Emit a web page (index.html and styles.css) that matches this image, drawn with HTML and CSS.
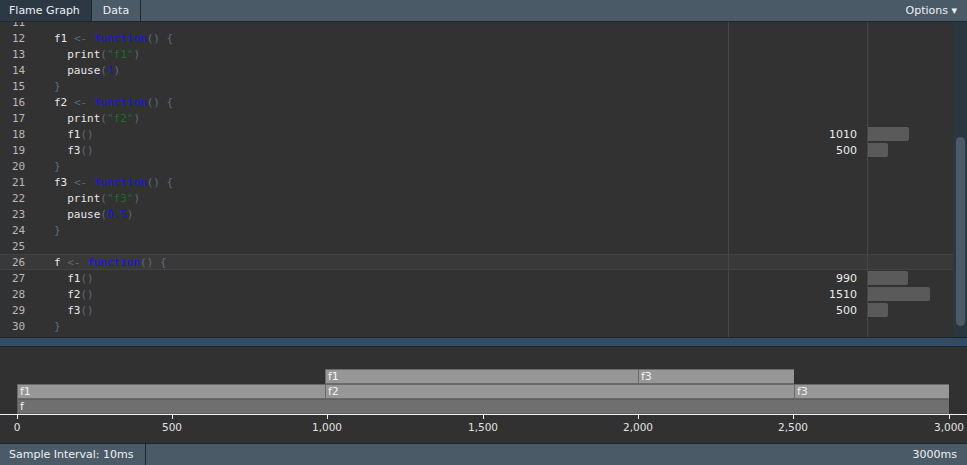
FILE: index.html
```html
<!DOCTYPE html>
<html>
<head>
<meta charset="utf-8">
<link rel="stylesheet" href="styles.css">
</head>
<body>
<div class="app">
  <div class="topbar">
    <div class="tab tab-active">Flame Graph</div>
    <div class="tab tab-data">Data</div>
    <div class="spacer"></div>
    <div class="options">Options ▾</div>
  </div>

  <div class="codepane">
    <div class="rows">
      <div class="row"><div class="src"><span class="ln">11</span><span class="code"></span></div><div class="cnt"></div><div class="barcell"></div></div>
      <div class="row"><div class="src"><span class="ln">12</span><span class="code">f1 <span class="p">&lt;-</span> <span class="kw">function</span><span class="p">() {</span></span></div><div class="cnt"></div><div class="barcell"></div></div>
      <div class="row"><div class="src"><span class="ln">13</span><span class="code">  print<span class="p">(</span><span class="str">"f1"</span><span class="p">)</span></span></div><div class="cnt"></div><div class="barcell"></div></div>
      <div class="row"><div class="src"><span class="ln">14</span><span class="code">  pause<span class="p">(</span><span class="num">1</span><span class="p">)</span></span></div><div class="cnt"></div><div class="barcell"></div></div>
      <div class="row"><div class="src"><span class="ln">15</span><span class="code"><span class="p">}</span></span></div><div class="cnt"></div><div class="barcell"></div></div>
      <div class="row"><div class="src"><span class="ln">16</span><span class="code">f2 <span class="p">&lt;-</span> <span class="kw">function</span><span class="p">() {</span></span></div><div class="cnt"></div><div class="barcell"></div></div>
      <div class="row"><div class="src"><span class="ln">17</span><span class="code">  print<span class="p">(</span><span class="str">"f2"</span><span class="p">)</span></span></div><div class="cnt"></div><div class="barcell"></div></div>
      <div class="row"><div class="src"><span class="ln">18</span><span class="code">  f1<span class="p">()</span></span></div><div class="cnt">1010</div><div class="barcell"><div class="hbar" style="width:41px"></div></div></div>
      <div class="row"><div class="src"><span class="ln">19</span><span class="code">  f3<span class="p">()</span></span></div><div class="cnt">500</div><div class="barcell"><div class="hbar" style="width:20px"></div></div></div>
      <div class="row"><div class="src"><span class="ln">20</span><span class="code"><span class="p">}</span></span></div><div class="cnt"></div><div class="barcell"></div></div>
      <div class="row"><div class="src"><span class="ln">21</span><span class="code">f3 <span class="p">&lt;-</span> <span class="kw">function</span><span class="p">() {</span></span></div><div class="cnt"></div><div class="barcell"></div></div>
      <div class="row"><div class="src"><span class="ln">22</span><span class="code">  print<span class="p">(</span><span class="str">"f3"</span><span class="p">)</span></span></div><div class="cnt"></div><div class="barcell"></div></div>
      <div class="row"><div class="src"><span class="ln">23</span><span class="code">  pause<span class="p">(</span><span class="num">0.5</span><span class="p">)</span></span></div><div class="cnt"></div><div class="barcell"></div></div>
      <div class="row"><div class="src"><span class="ln">24</span><span class="code"><span class="p">}</span></span></div><div class="cnt"></div><div class="barcell"></div></div>
      <div class="row"><div class="src"><span class="ln">25</span><span class="code"></span></div><div class="cnt"></div><div class="barcell"></div></div>
      <div class="row row-hl"><div class="src"><span class="ln">26</span><span class="code">f <span class="p">&lt;-</span> <span class="kw">function</span><span class="p">() {</span></span></div><div class="cnt"></div><div class="barcell"></div></div>
      <div class="row"><div class="src"><span class="ln">27</span><span class="code">  f1<span class="p">()</span></span></div><div class="cnt">990</div><div class="barcell"><div class="hbar" style="width:40px"></div></div></div>
      <div class="row"><div class="src"><span class="ln">28</span><span class="code">  f2<span class="p">()</span></span></div><div class="cnt">1510</div><div class="barcell"><div class="hbar" style="width:62px"></div></div></div>
      <div class="row"><div class="src"><span class="ln">29</span><span class="code">  f3<span class="p">()</span></span></div><div class="cnt">500</div><div class="barcell"><div class="hbar" style="width:20px"></div></div></div>
      <div class="row"><div class="src"><span class="ln">30</span><span class="code"><span class="p">}</span></span></div><div class="cnt"></div><div class="barcell"></div></div>
      <div class="row row-fill"><div class="src"></div><div class="cnt"></div><div class="barcell"></div></div>
    </div>
    <div class="scrollbar"><div class="thumb"></div></div>
  </div>

  <div class="splitter"></div>

  <div class="flame">
    <div class="canvas">
      <div class="fbar light" style="left:325px;width:313px;top:22px">f1</div>
      <div class="fbar light" style="left:638px;width:156px;top:22px">f3</div>
      <div class="fbar light" style="left:17px;width:308px;top:37px">f1</div>
      <div class="fbar light" style="left:325px;width:469px;top:37px">f2</div>
      <div class="fbar light" style="left:794px;width:155px;top:37px">f3</div>
      <div class="fbar dark" style="left:17px;width:932px;top:52px">f</div>
      <div class="axis"></div>
      <div class="tick" style="left:17px"><span>0</span></div>
      <div class="tick" style="left:172px"><span>500</span></div>
      <div class="tick" style="left:327px"><span>1,000</span></div>
      <div class="tick" style="left:483px"><span>1,500</span></div>
      <div class="tick" style="left:638px"><span>2,000</span></div>
      <div class="tick" style="left:793px"><span>2,500</span></div>
      <div class="tick" style="left:949px"><span>3,000</span></div>
    </div>
  </div>

  <div class="statusbar">
    <div class="tab">Sample Interval: 10ms</div>
    <div class="spacer"></div>
    <div class="total">3000ms</div>
  </div>
</div>
</body>
</html>
```

FILE: styles.css
```css
html, body {
  margin: 0;
  padding: 0;
  background: #313131;
}
body {
  font-family: "DejaVu Sans", sans-serif;
  font-size: 11px;
  color: #e8e8e8;
}
.app {
  width: 967px;
  height: 465px;
  display: flex;
  flex-direction: column;
  overflow: hidden;
}

/* top bar */
.topbar {
  height: 21px;
  flex: none;
  display: flex;
  align-items: stretch;
  background: #4b5a67;
  border-bottom: 1px solid #1d2731;
}
.tab {
  display: flex;
  align-items: center;
  padding: 0 11px 0 9px;
  border-right: 1px solid #1d2731;
  color: #eef0f2;
}
.tab-active {
  background: #2c3944;
}
.tab-data {
  padding-left: 11px;
  padding-right: 11px;
}
.spacer { flex: 1; }
.options {
  display: flex;
  align-items: center;
  padding-right: 10px;
  color: #eef0f2;
}

/* code pane */
.codepane {
  height: 315px;
  flex: none;
  display: flex;
  overflow: hidden;
  background: #323232;
}
.rows {
  flex: 1;
  display: grid;
  grid-template-columns: 728px 139px 1fr;
  grid-auto-rows: 16px;
  margin-top: -8px;
}
.row { display: contents; }
.src, .cnt, .barcell {
  display: flex;
  align-items: center;
  height: 16px;
  box-sizing: border-box;
}
.cnt, .barcell { border-left: 1px solid #464646; }
.cnt {
  justify-content: flex-end;
  padding-right: 10px;
  color: #ececec;
}
.row-hl > div {
  background: #393939;
  border-top: 1px solid #424242;
  border-bottom: 1px solid #424242;
}
.row-fill > div { height: 20px; }
.ln {
  width: 42px;
  padding-left: 12px;
  flex: none;
  color: #b8b8b8;
  font-family: "DejaVu Sans Mono", monospace;
}
.code {
  white-space: pre;
  font-family: "DejaVu Sans Mono", monospace;
  color: #e8e8e8;
}
.code .p { color: #5f6b78; }
.code .kw { color: #1414e6; }
.code .str { color: #1e6e1e; }
.code .num { color: #1414e6; }
.hbar {
  height: 14px;
  background: #5a5a5a;
  border-radius: 0 2px 2px 0;
}

.scrollbar {
  width: 14px;
  flex: none;
  background: #2b3640;
  padding-top: 115px;
  box-sizing: border-box;
}
.thumb {
  width: 9px;
  margin-left: 3px;
  height: 189px;
  border-radius: 5px;
  background: #4b5a67;
}

/* splitter */
.splitter {
  height: 8px;
  flex: none;
  background: #314c63;
  border-top: 1px solid #1a2632;
  border-bottom: 1px solid #1a2632;
}

/* flame */
.flame {
  flex: 1;
  background: #313131;
}
.canvas {
  position: relative;
  height: 100%;
}
.fbar {
  position: absolute;
  height: 15px;
  box-sizing: border-box;
  border: 1px solid #6a6a6a;
  border-right: none;
  padding-left: 2px;
  line-height: 13px;
  color: #f2f2f2;
  white-space: nowrap;
  overflow: hidden;
}
.fbar.light { background: #979797; }
.fbar.dark { background: #6f6f6f; border-color: #5f5f5f; }
.axis {
  position: absolute;
  left: 0;
  right: 0;
  top: 67px;
  height: 1px;
  background: #f2f2f2;
}
.tick {
  position: absolute;
  top: 67px;
  width: 1px;
  height: 5px;
  background: #f2f2f2;
}
.tick span {
  position: absolute;
  top: 7px;
  left: 0;
  transform: translateX(-50%);
  font-size: 10.5px;
  color: #e2e2e2;
  white-space: nowrap;
}

/* status bar */
.statusbar {
  height: 21px;
  flex: none;
  display: flex;
  background: #4b5a67;
  border-top: 1px solid #1d2731;
}
.statusbar .tab { padding-right: 11px; }
.total {
  display: flex;
  align-items: center;
  padding-right: 10px;
  color: #eef0f2;
}
```
